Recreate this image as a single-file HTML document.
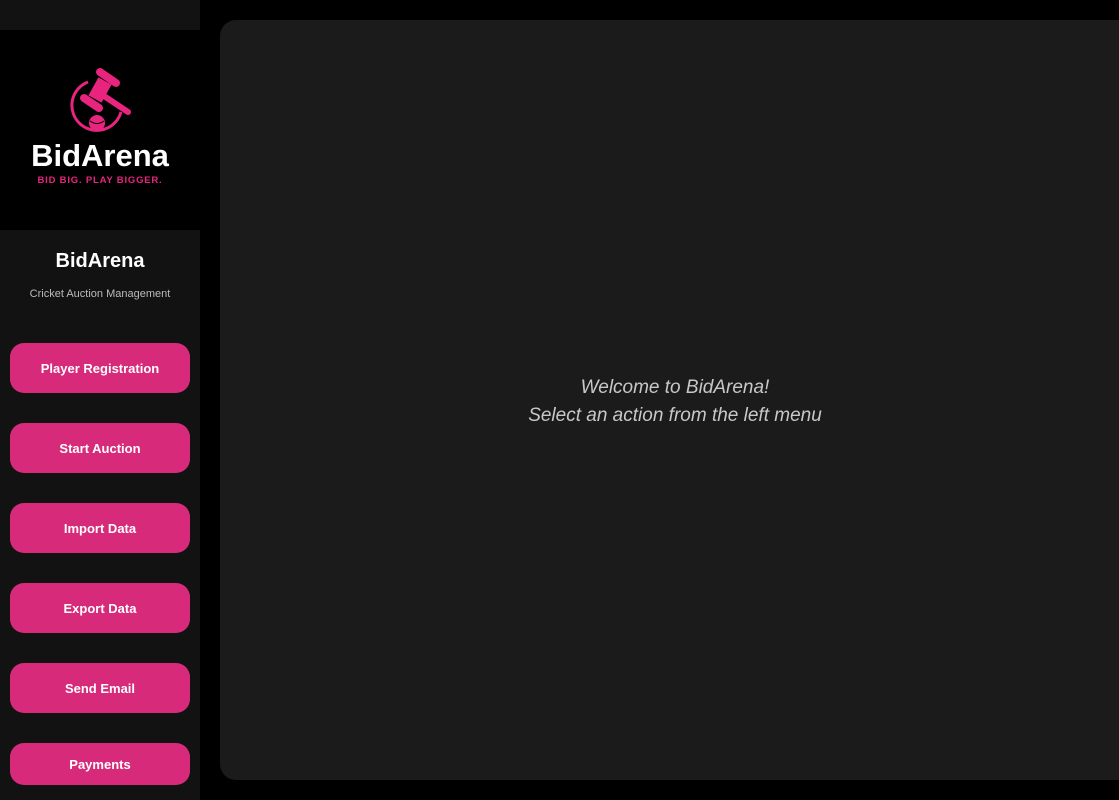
<!DOCTYPE html>
<html><head><style>
*{margin:0;padding:0;box-sizing:border-box}
body{width:1119px;height:800px;background:#000;position:relative;overflow:hidden;font-family:"Liberation Sans",sans-serif}
.side{position:absolute;left:0;top:0;width:200px;height:800px;background:#121212}
.logo{position:absolute;left:0;top:30px;width:200px;height:200px;background:#000}
.title{position:absolute;top:250px;width:200px;text-align:center;color:#fff;font-weight:bold;font-size:20px}
.sub{position:absolute;top:288px;width:200px;text-align:center;color:#bbb;font-size:11px}
.btn{position:absolute;left:10px;width:180px;height:50px;background:#d82a7a;border-radius:14px;color:#fff;font-weight:bold;font-size:13px;display:flex;align-items:center;justify-content:center}
.main{position:absolute;left:220px;top:20px;width:920px;height:760px;background:#1b1b1b;border-radius:16px}
.msg{position:absolute;left:220px;width:910px;text-align:center;color:#c8c8c8;font-style:italic;font-size:19px;top:374px;line-height:28px}
</style></head><body>
<div class="side">
<div class="logo">
<svg width="200" height="200">
<path d="M88 52 A25 25 0 1 0 121 82" fill="none" stroke="#e8247f" stroke-width="3"/>
<g stroke="#e8247f" stroke-linecap="round" fill="none">
<line x1="100" y1="42" x2="116" y2="53" stroke-width="8"/>
<line x1="105" y1="51" x2="95" y2="69" stroke-width="15" stroke-linecap="butt"/>
<line x1="84" y1="68" x2="99" y2="78" stroke-width="8"/>
<line x1="104" y1="66" x2="128" y2="82" stroke-width="6"/>
</g>
<circle cx="97" cy="93" r="8" fill="#e8247f"/>
<path d="M90 91 Q97 96 104 91" stroke="#000" stroke-width="1" fill="none"/>
<text x="100" y="136" text-anchor="middle" fill="#fff" font-family="Liberation Sans" font-weight="bold" font-size="31">BidArena</text>
<text x="100" y="153" text-anchor="middle" fill="#e8247f" font-family="Liberation Sans" font-weight="bold" font-size="9.5" letter-spacing="0.8">BID BIG. PLAY BIGGER.</text>
</svg>
</div>
<div class="title">BidArena</div>
<div class="sub">Cricket Auction Management</div>
<div class="btn" style="top:343px">Player Registration</div>
<div class="btn" style="top:423px">Start Auction</div>
<div class="btn" style="top:503px">Import Data</div>
<div class="btn" style="top:583px">Export Data</div>
<div class="btn" style="top:663px">Send Email</div>
<div class="btn" style="top:743px;height:42px">Payments</div>
</div>
<div class="main"></div>
<div class="msg">Welcome to BidArena!<br>Select an action from the left menu</div>
</body></html>
